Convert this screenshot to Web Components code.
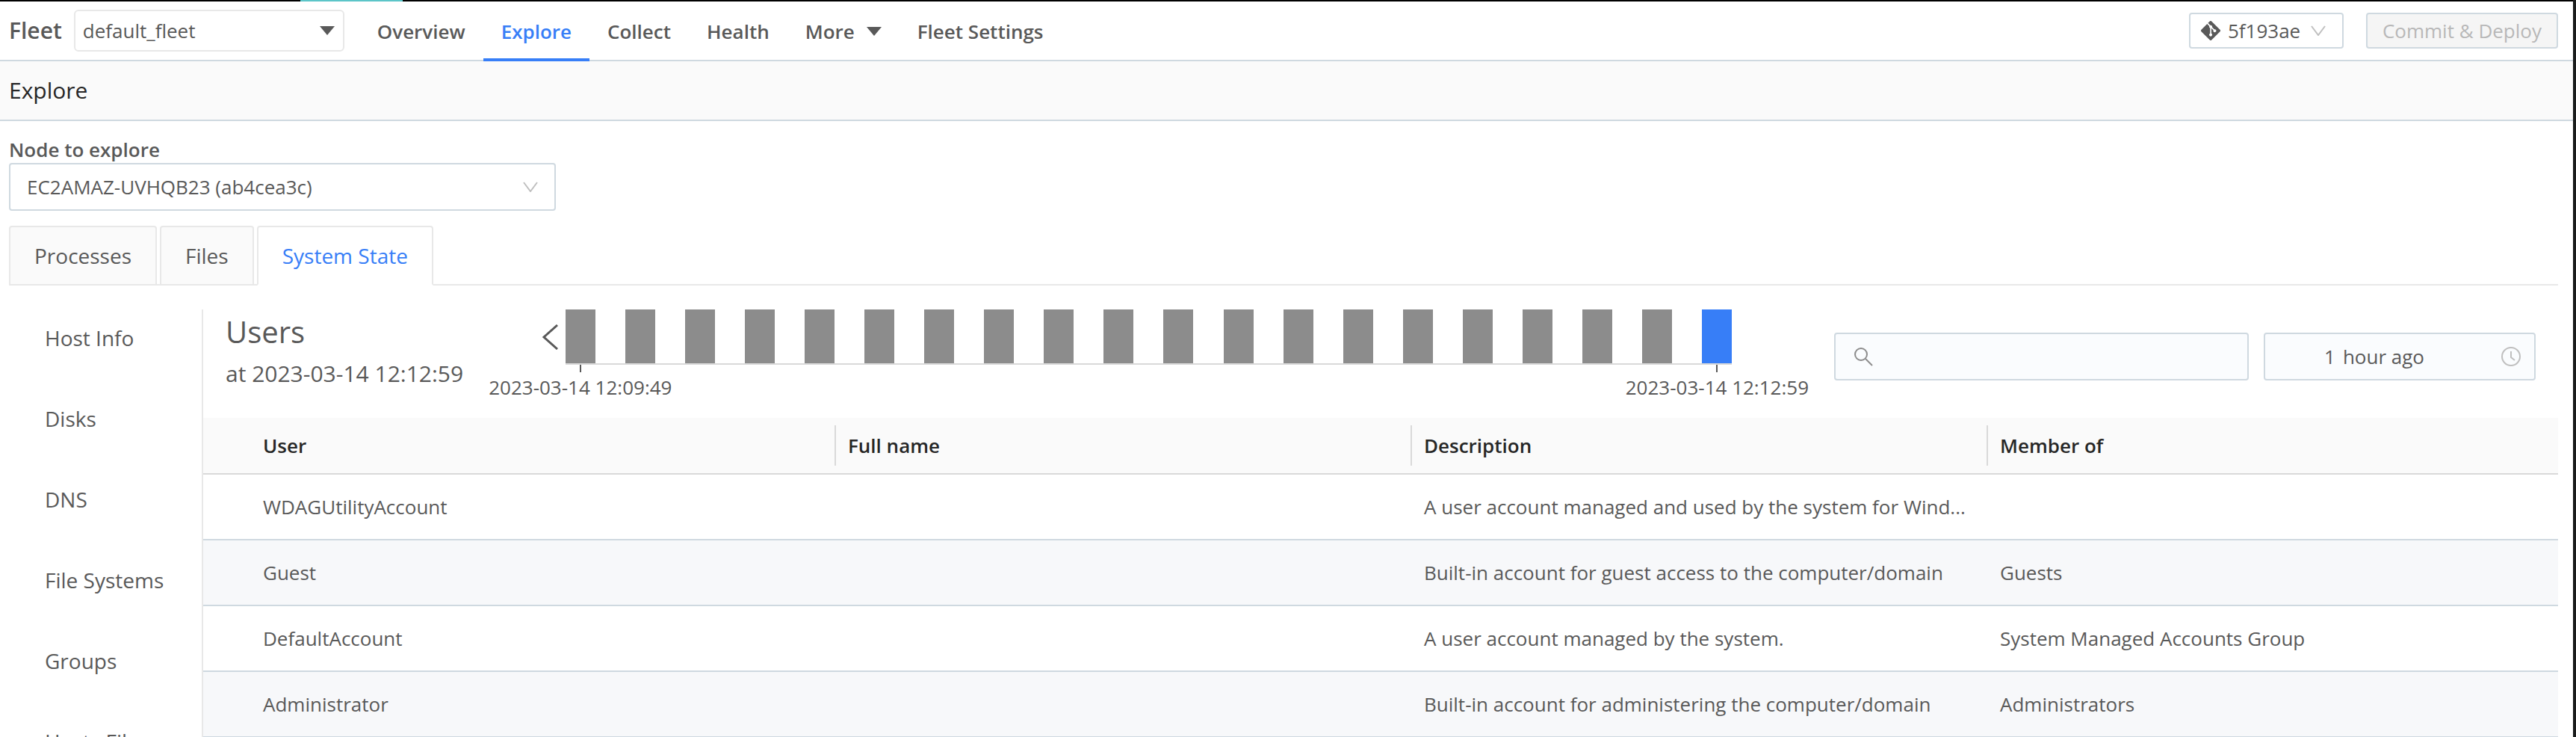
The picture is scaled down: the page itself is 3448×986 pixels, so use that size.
<!DOCTYPE html>
<html lang="en">
<head>
<meta charset="utf-8">
<title>Fleet - Explore</title>
<style>
    body {
        --blue: #377ef7;
        --line: #cfd9e0;
        --soft: #e8e8e8;
        --ink: #595959;
        margin: 0;
        font: 26px/36px "Open Sans", "Noto Sans", sans-serif;
        color: var(--ink);
        background: #fff;
    }
</style>
</head>
<body>
<fleet-app>
    <fleet-header slot="header"></fleet-header>
    <page-title slot="title">Explore</page-title>
    <node-picker></node-picker>
    <tab-strip></tab-strip>
    <state-view>
        <side-menu slot="menu"></side-menu>
        <view-title slot="head">Users<span slot="when">at 2023-03-14 12:12:59</span></view-title>
        <snapshot-timeline slot="head" count="20" from="2023-03-14 12:09:49" to="2023-03-14 12:12:59"></snapshot-timeline>
        <view-filters slot="head"></view-filters>
        <user-table></user-table>
    </state-view>
</fleet-app>

<script>
    const define = (name, html) => {
        window.customElements.define(name, class extends HTMLElement {
            constructor() {
                super();
                const root = this.attachShadow({ mode: 'open' });
                root.innerHTML = typeof html === 'function' ? html(this) : html;
            }
        });
    };

    define('fleet-app', `
        <style>
            :host {
                display: flex;
                flex-direction: column;
                box-sizing: border-box;
                height: 100vh;
                overflow: hidden;
                border-right: 4px solid #1a1c1c;
            }
            .strip {
                flex: none;
                height: 2px;
                background: linear-gradient(90deg, #000 402px, #5cc5c8 402px, #5cc5c8 539px, #000 539px);
            }
            main {
                flex: 1;
                min-height: 0;
                display: flex;
                flex-direction: column;
                padding: 20px 20px 0 12px;
            }
        </style>
        <div class="strip"></div>
        <slot name="header"></slot>
        <slot name="title"></slot>
        <main><slot></slot></main>
    `);

    define('fleet-header', `
        <style>
            :host {
                display: flex;
                align-items: center;
                flex: none;
                height: 78px;
                padding: 0 20px 0 12px;
                border-bottom: 2px solid var(--line);
            }
            label {
                font-size: 30px;
                font-weight: 600;
                margin-right: 16px;
            }
            .picker {
                display: grid;
                align-items: center;
                width: 362px;
                margin-right: 20px;
            }
            .picker > * { grid-area: 1 / 1; }
            .picker svg { justify-self: end; margin-right: 13px; pointer-events: none; }
            select {
                appearance: none;
                width: 100%;
                height: 56px;
                padding: 0 48px 0 10px;
                border: 2px solid var(--soft);
                border-radius: 6px;
                background: #fff;
                font: inherit;
                color: inherit;
            }
            nav { display: flex; align-self: stretch; flex: 1; }
            nav a {
                display: flex;
                align-items: center;
                gap: 16px;
                height: 72px;
                padding: 4px 24px 0;
                border-bottom: 4px solid transparent;
                font-weight: 600;
                color: inherit;
                text-decoration: none;
                white-space: nowrap;
            }
            nav a.active { color: var(--blue); border-color: var(--blue); }
            .actions { display: flex; gap: 30px; }
            button {
                display: flex;
                align-items: center;
                box-sizing: border-box;
                height: 48px;
                border: 2px solid var(--line);
                border-radius: 4px;
                background: #fff;
                font: inherit;
                color: inherit;
                white-space: nowrap;
            }
            .commit { width: 207px; padding: 0 22px 0 14px; gap: 10px; }
            .commit svg:last-child { margin-left: auto; }
            .deploy { padding: 0 20px; background: #f5f5f5; color: #b8b8b8; }
        </style>
        <label for="fleet">Fleet</label>
        <div class="picker">
            <select id="fleet"><option>default_fleet</option></select>
            <svg width="20" height="12" viewBox="0 0 20 12" fill="#595959"><path d="M0 0h20L10 12z"/></svg>
        </div>
        <nav>
            <a href="#overview">Overview</a>
            <a href="#explore" class="active">Explore</a>
            <a href="#collect">Collect</a>
            <a href="#health">Health</a>
            <a href="#more">More <svg width="20" height="12" viewBox="0 0 20 12" fill="#595959"><path d="M0 0h20L10 12z"/></svg></a>
            <a href="#settings">Fleet Settings</a>
        </nav>
        <div class="actions">
            <button class="commit" type="button">
                <svg width="26" height="26" viewBox="0 32 448 448" fill="#595959"><path d="M439.55 236.05L244 40.45a28.87 28.87 0 0 0-40.81 0l-40.66 40.63 51.52 51.52c27.06-9.14 52.68 16.77 43.39 43.68l49.66 49.66c34.23-11.8 61.18 31 35.47 56.69-26.49 26.49-70.21-2.87-56-37.34L240.22 199v121.85c25.3 12.54 22.26 41.85 9.08 55a34.34 34.34 0 0 1-48.55 0c-17.57-17.6-11.07-46.91 11.25-56v-123c-20.8-8.51-24.6-30.74-18.64-45L142.57 101 8.45 235.14a28.86 28.86 0 0 0 0 40.81l195.61 195.6a28.86 28.86 0 0 0 40.8 0l194.69-194.69a28.86 28.86 0 0 0 0-40.81z"/></svg>
                5f193ae
                <svg width="20" height="14" viewBox="0 0 20 14" fill="none" stroke="#bfbfbf" stroke-width="2"><path d="M1 1l9 12 9-12"/></svg>
            </button>
            <button class="deploy" type="button" disabled>Commit &amp; Deploy</button>
        </div>
    `);

    define('page-title', `
        <style>
            :host {
                display: block;
                flex: none;
                border-bottom: 2px solid var(--line);
                background: #fafafa;
            }
            h1 {
                margin: 0;
                padding: 0 12px;
                font-size: 30px;
                font-weight: 400;
                line-height: 78px;
                color: #262626;
            }
        </style>
        <h1><slot></slot></h1>
    `);

    define('node-picker', `
        <style>
            :host { display: block; flex: none; }
            label { display: block; font-weight: 600; }
            .picker { display: grid; align-items: center; width: 732px; }
            .picker > * { grid-area: 1 / 1; }
            svg { justify-self: end; margin-right: 24px; pointer-events: none; }
            select {
                appearance: none;
                width: 100%;
                height: 64px;
                padding: 0 60px 0 22px;
                border: 2px solid var(--line);
                border-radius: 4px;
                background: #fff;
                font: inherit;
                color: inherit;
            }
        </style>
        <label for="node">Node to explore</label>
        <div class="picker">
            <select id="node"><option>EC2AMAZ-UVHQB23 (ab4cea3c)</option></select>
            <svg width="20" height="14" viewBox="0 0 20 14" fill="none" stroke="#bfbfbf" stroke-width="2"><path d="M1 1l9 12 9-12"/></svg>
        </div>
    `);

    define('tab-strip', `
        <style>
            :host {
                display: flex;
                gap: 4px;
                flex: none;
                margin-top: 20px;
                border-bottom: 2px solid var(--soft);
            }
            button {
                height: 80px;
                margin-bottom: -2px;
                padding: 0 32px;
                border: 2px solid var(--soft);
                border-radius: 4px 4px 0 0;
                background: #fafafa;
                font: inherit;
                font-size: 28px;
                color: inherit;
            }
            button.active {
                border-bottom-color: #fff;
                background: #fff;
                color: var(--blue);
                font-weight: 500;
            }
        </style>
        <button type="button">Processes</button>
        <button type="button">Files</button>
        <button type="button" class="active">System State</button>
    `);

    define('state-view', `
        <style>
            :host {
                display: grid;
                grid-template-columns: 258px minmax(0, 1fr);
                flex: 1;
                min-height: 0;
                padding-top: 32px;
            }
            .menu { min-height: 0; overflow: hidden; }
            section {
                min-height: 0;
                overflow: hidden;
                border-left: 2px solid var(--soft);
            }
            .head {
                display: flex;
                gap: 34px;
                height: 145px;
                padding: 0 30px;
            }
        </style>
        <div class="menu"><slot name="menu"></slot></div>
        <section>
            <div class="head"><slot name="head"></slot></div>
            <slot></slot>
        </section>
    `);

    const menu = ['Host Info', 'Disks', 'DNS', 'File Systems', 'Groups', 'Hosts File'];

    define('side-menu', `
        <style>
            :host { display: block; }
            ul { margin: 0; padding: 0 0 0 48px; list-style: none; }
            a {
                display: block;
                margin-bottom: 32px;
                font-size: 28px;
                line-height: 76px;
                color: inherit;
                text-decoration: none;
            }
        </style>
        <ul>${menu.map(item => `<li><a href="#">${item}</a></li>`).join('')}</ul>
    `);

    define('view-title', `
        <style>
            :host { display: block; flex: none; }
            h2 { margin: 0; font-size: 40px; font-weight: 400; line-height: 60px; }
            p { margin: 0; font-size: 30px; line-height: 52px; }
        </style>
        <h2><slot></slot></h2>
        <p><slot name="when"></slot></p>
    `);

    // one bar per snapshot, the newest is selected
    define('snapshot-timeline', el => {
        const count = Number(el.getAttribute('count'));
        const bars = Array.from({ length: count }, (_, i) =>
            `<button type="button" aria-label="Snapshot ${i + 1}" class="bar${i === count - 1 ? ' active' : ''}"></button>`).join('');
        return `
        <style>
            :host { display: block; flex: 1; min-width: 0; }
            .row { display: flex; align-items: center; padding-right: 103px; }
            .back {
                width: 103px;
                padding: 0 10px 0 0;
                border: 0;
                background: none;
                text-align: right;
                line-height: 0;
            }
            .bars {
                flex: 1;
                display: flex;
                justify-content: space-between;
                border-bottom: 2px solid #d9d9d9;
            }
            .bar {
                width: 40px;
                height: 72px;
                padding: 0;
                border: 0;
                background: #8c8c8c;
            }
            .bar.active { background: var(--blue); }
            .dates { display: flex; justify-content: space-between; }
            .dates span { display: flex; flex-direction: column; align-items: center; gap: 2px; }
            .dates span::before { content: ""; width: 2px; height: 10px; background: var(--ink); }
        </style>
        <div class="row">
            <button class="back" type="button" aria-label="Earlier">
                <svg width="22" height="34" viewBox="0 0 22 34" fill="none" stroke="#595959" stroke-width="3"><path d="M21 1L3 17l18 16"/></svg>
            </button>
            <div class="bars">${bars}</div>
        </div>
        <div class="dates"><span>${el.getAttribute('from')}</span><span>${el.getAttribute('to')}</span></div>
        `;
    });

    define('view-filters', `
        <style>
            :host { display: flex; flex: none; gap: 20px; padding-top: 31px; }
            .box {
                display: flex;
                align-items: center;
                box-sizing: border-box;
                height: 64px;
                border: 2px solid var(--line);
                border-radius: 4px;
                background: #fafcfe;
                font: inherit;
                color: inherit;
            }
            .search { width: 555px; padding: 0 24px; gap: 16px; }
            input { flex: 1; min-width: 0; border: 0; outline: 0; background: none; font: inherit; color: inherit; }
            .time { width: 364px; padding: 0 18px; }
            .time span { flex: 1; display: flex; justify-content: center; gap: 10px; padding-right: 42px; }
            .time b { font-weight: 400; }
        </style>
        <label class="box search">
            <svg width="26" height="26" viewBox="0 0 26 26" fill="none" stroke="#8c8c8c" stroke-width="2"><circle cx="10" cy="10" r="8"/><path d="M16 16l9 9"/></svg>
            <input type="search" aria-label="Search">
        </label>
        <button class="box time" type="button">
            <span><b>1</b>hour ago</span>
            <svg width="26" height="26" viewBox="0 0 26 26" fill="none" stroke="#bfbfbf" stroke-width="2"><circle cx="13" cy="13" r="12"/><path d="M13 6v8l5 4"/></svg>
        </button>
    `);

    const users = [
        ['WDAGUtilityAccount', '', 'A user account managed and used by the system for Wind...', ''],
        ['Guest', '', 'Built-in account for guest access to the computer/domain', 'Guests'],
        ['DefaultAccount', '', 'A user account managed by the system.', 'System Managed Accounts Group'],
        ['Administrator', '', 'Built-in account for administering the computer/domain', 'Administrators'],
    ];

    define('user-table', `
        <style>
            :host { display: block; }
            table { width: 100%; table-layout: fixed; border-collapse: separate; border-spacing: 0; }
            col { width: 771px; }
            col.first { width: 847px; }
            col.last { width: auto; }
            th, td {
                box-sizing: border-box;
                padding: 0 16px;
                text-align: left;
                white-space: nowrap;
                overflow: hidden;
                text-overflow: ellipsis;
            }
            th:first-child, td:first-child { padding-left: 80px; }
            th {
                height: 76px;
                border-bottom: 2px solid #d9d9d9;
                background: linear-gradient(#d9d9d9, #d9d9d9) right center / 2px 54px no-repeat #fafafa;
                font-weight: 600;
                color: #262626;
            }
            th:last-child { background-image: none; }
            td { height: 88px; border-bottom: 2px solid var(--line); }
            tbody tr:nth-child(even) td { background: #f7f8fa; }
        </style>
        <table>
            <colgroup><col class="first"><col><col><col class="last"></colgroup>
            <thead><tr><th>User</th><th>Full name</th><th>Description</th><th>Member of</th></tr></thead>
            <tbody>${users.map(row => `<tr>${row.map(cell => `<td>${cell}</td>`).join('')}</tr>`).join('')}</tbody>
        </table>
    `);
</script>
</body>
</html>
